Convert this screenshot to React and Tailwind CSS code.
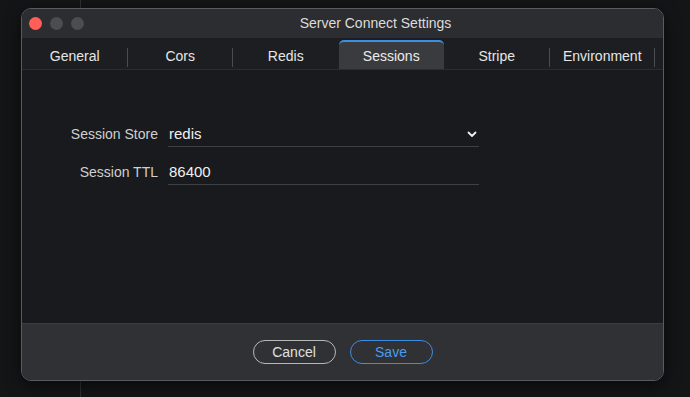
import React from 'react';

const tabs = ['General', 'Cors', 'Redis', 'Sessions', 'Stripe', 'Environment'];

const Chevron = () => (
    <svg width="10" height="7" viewBox="0 0 10 7" className="text-[#eeeeee]">
        <path d="M1.5 1.5 L5 5 L8.5 1.5" fill="none" stroke="currentColor" strokeWidth="1.8" strokeLinecap="round" strokeLinejoin="round" />
    </svg>
);

const Field = ({ label, value, select }) => (
    <div className="flex items-end">
        <div className="w-[136px] text-right text-[14px] text-[#d0d0d0] pb-[2px]">{label}</div>
        <div className="ml-[10px] w-[311px] h-[25px] flex items-center justify-between border-b border-[#3e4043] pl-[1px] pr-[2px]">
            <span className="text-[15px] text-[#f0f0f0] pt-[1px]">{value}</span>
            {select && <Chevron />}
        </div>
    </div>
);

const App = () => {
    return (
        <div className="relative w-[690px] h-[397px] bg-[#141517] overflow-hidden" style={{ fontFamily: '"Liberation Sans", Arial, sans-serif' }}>
            {/* background editor divider behind the dialog */}
            <div className="absolute left-[80px] top-0 bottom-0 w-px bg-[#2e3033]" />

            <div className="relative ml-[21px] mt-[8px] w-[643px] h-[373px] rounded-[10px] border border-[#5a5b5e] overflow-hidden flex flex-col bg-[#181a1d] shadow-[0_4px_16px_rgba(0,0,0,0.6)]">
                {/* title bar */}
                <div className="relative h-[29px] bg-[#2c2d30] flex items-center shrink-0">
                    <div className="flex items-center gap-[8px] pl-[7px]">
                        <span className="w-[13px] h-[13px] rounded-full bg-[#fe5f57]" />
                        <span className="w-[13px] h-[13px] rounded-full bg-[#4c4d50]" />
                        <span className="w-[13px] h-[13px] rounded-full bg-[#4c4d50]" />
                    </div>
                    <div className="absolute inset-0 flex items-center justify-center pl-[66px] text-[14px] text-[#dcdcdc]">
                        Server Connect Settings
                    </div>
                </div>

                {/* tab bar */}
                <div className="h-[32px] bg-[#1c1e21] border-b border-[#2b2d30] flex items-end shrink-0">
                    {tabs.map((t, i) => {
                        const active = t === 'Sessions';
                        const next = tabs[i + 1];
                        const showDivider = !active && next !== 'Sessions';
                        return (
                            <div key={t} className="relative w-[105.5px] h-[29px] flex items-center justify-center">
                                {active ? (
                                    <div className="absolute inset-0 bg-[#3a3b3e] rounded-t-[5px] border-t-2 border-[#3d8ee0] flex items-center justify-center pt-[2px] text-[14px] text-[#ececec]">
                                        {t}
                                    </div>
                                ) : (
                                    <span className="text-[14px] text-[#e6e6e6] pt-[4px]">{t}</span>
                                )}
                                {showDivider && (
                                    <div className="absolute right-0 top-[8px] h-[19px] w-px bg-[#4a4c4f]" />
                                )}
                            </div>
                        );
                    })}
                </div>

                {/* content */}
                <div className="flex-1 pt-[52px] flex flex-col gap-[13px]">
                    <Field label="Session Store" value="redis" select />
                    <Field label="Session TTL" value="86400" />
                </div>

                {/* footer */}
                <div className="h-[57px] bg-[#2f3134] border-t border-[#3a3c3f] flex items-center justify-center gap-[14px] shrink-0">
                    <button className="w-[83px] h-[24px] rounded-full border border-[#b8b8b8] text-[14px] text-[#e0e0e0]">
                        Cancel
                    </button>
                    <button className="w-[83px] h-[24px] rounded-full border border-[#3d8ee0] text-[14px] text-[#4a9bec]">
                        Save
                    </button>
                </div>
            </div>
        </div>
    );
};

export default App;
